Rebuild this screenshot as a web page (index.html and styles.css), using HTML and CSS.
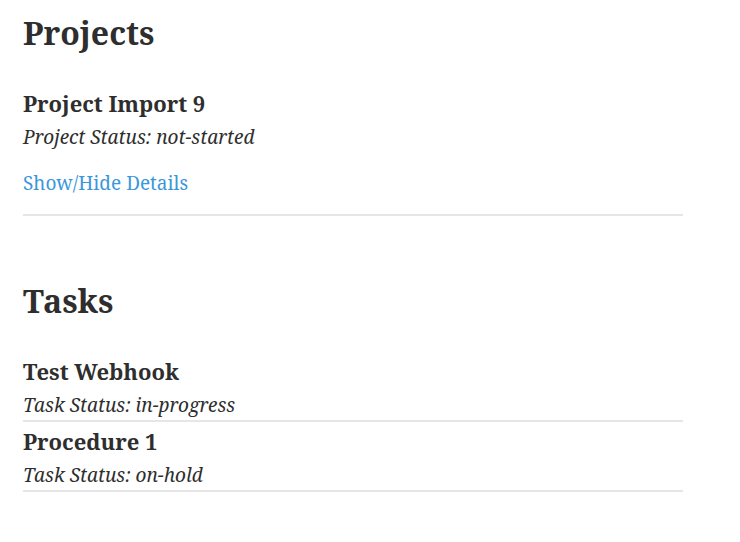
FILE: index.html
```html
<!DOCTYPE html>
<html>
<head>
<meta charset="utf-8">
<link rel="stylesheet" href="styles.css">
</head>
<body>
<main class="page">
  <section class="section">
    <h1 class="section-title">Projects</h1>
    <div class="item project">
      <h2 class="item-title">Project Import 9</h2>
      <p class="item-status">Project Status: not-started</p>
      <a class="toggle" href="#">Show/Hide Details</a>
    </div>
  </section>
  <section class="section tasks">
    <h1 class="section-title">Tasks</h1>
    <div class="item task">
      <h2 class="item-title">Test Webhook</h2>
      <p class="item-status">Task Status: in-progress</p>
    </div>
    <div class="item task">
      <h2 class="item-title">Procedure 1</h2>
      <p class="item-status">Task Status: on-hold</p>
    </div>
  </section>
</main>
</body>
</html>
```
FILE: styles.css
```css
* { box-sizing: border-box; }
body {
  margin: 0;
  background: #fff;
  color: #2e2e2e;
  font-family: "Noto Serif", "DejaVu Serif", "Liberation Serif", serif;
}
.page {
  width: 660px;
  margin-left: 23px;
  padding-top: 11px;
}
.section-title {
  margin: 0 0 29px;
  font-size: 32px;
  line-height: 44px;
  font-weight: 700;
}
.item {
  padding-top: 4px;
  border-bottom: 2px solid #e6e6e6;
}
.item-title {
  margin: 0;
  font-size: 22px;
  line-height: 31px;
  font-weight: 700;
}
.item-status {
  margin: 0;
  padding-top: 4px;
  font-size: 19px;
  font-style: italic;
  line-height: 29px;
}
.project {
  padding-bottom: 16px;
}
.toggle {
  display: inline-block;
  margin-top: 16px;
  font-size: 19px;
  line-height: 30px;
  color: #3a97db;
  text-decoration: none;
}
.tasks { margin-top: 63px; }
```
